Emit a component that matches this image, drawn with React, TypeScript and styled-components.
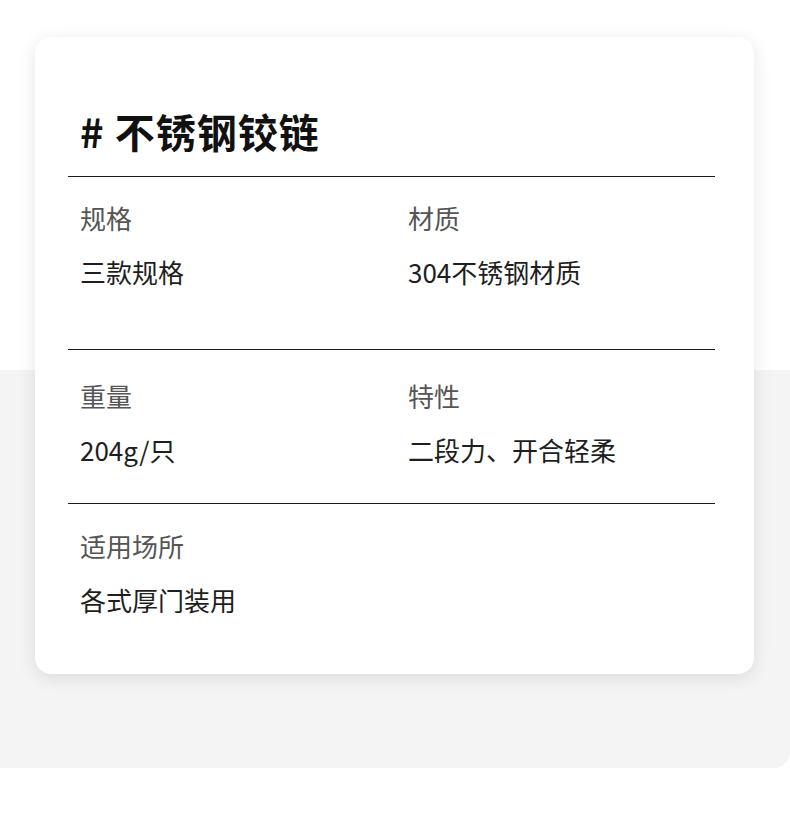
import { FC } from "react";
import styled, { createGlobalStyle } from "styled-components";

const GlobalStyle = createGlobalStyle`
  html, body {
    margin: 0;
    padding: 0;
    background: #fff;
  }

  body {
    font-family: "Noto Sans CJK SC", "Noto Sans", sans-serif;
    -webkit-font-smoothing: antialiased;
  }
`;

const Stage = styled.main`
  position: relative;
  height: 824px;
  padding: 37px 36px 0 35px;
  box-sizing: border-box;

  &::before {
    content: "";
    position: absolute;
    left: 0;
    right: 0;
    top: 370px;
    height: 398px;
    background-color: #f4f4f4;
    border-radius: 0 0 16px 0;
  }
`;

const Card = styled.section`
  position: relative;
  z-index: 1;
  display: flex;
  flex-direction: column;
  height: 637px;
  padding: 0 39px 0 33px;
  box-sizing: border-box;
  background-color: #fff;
  border-radius: 16px;
  box-shadow: 0 4px 18px rgba(0, 0, 0, 0.1);
`;

const Title = styled.h2`
  margin: 70px 0 0;
  padding: 0 12px 21px;
  font-size: 40px;
  font-weight: 700;
  letter-spacing: 1px;
  line-height: 48px;
  color: #111;
  border-bottom: 1px solid #1a1a1a;
`;

const Row = styled.div<{ $top: number; $bottom: number; $line?: boolean }>`
  display: grid;
  grid-template-columns: 328px 1fr;
  padding: ${(p) => `${p.$top}px 12px ${p.$bottom}px`};
  border-bottom: ${(p) => (p.$line ? "1px solid #1a1a1a" : "none")};
`;

const Spec = styled.div`
  display: flex;
  flex-direction: column;
  gap: 18px;
`;

const Label = styled.span`
  font-size: 26px;
  line-height: 36px;
  color: #555;
`;

const Value = styled.span`
  font-size: 26px;
  line-height: 36px;
  color: #1e1e1e;
`;

interface Item {
  label: string;
  value: string;
}

interface RowData {
  items: Item[];
  top: number;
  bottom: number;
  line: boolean;
}

const rows: RowData[] = [
  {
    items: [
      { label: "规格", value: "三款规格" },
      { label: "材质", value: "304不锈钢材质" },
    ],
    top: 23,
    bottom: 59,
    line: true,
  },
  {
    items: [
      { label: "重量", value: "204g/只" },
      { label: "特性", value: "二段力、开合轻柔" },
    ],
    top: 28,
    bottom: 35,
    line: true,
  },
  {
    items: [{ label: "适用场所", value: "各式厚门装用" }],
    top: 24,
    bottom: 0,
    line: false,
  },
];

const SpecItem: FC<Item> = ({ label, value }) => (
  <Spec>
    <Label>{label}</Label>
    <Value>{value}</Value>
  </Spec>
);

const App: FC = () => {
  return (
    <>
      <GlobalStyle />
      <Stage>
        <Card>
          <Title># 不锈钢铰链</Title>
          {rows.map((r, i) => (
            <Row key={i} $top={r.top} $bottom={r.bottom} $line={r.line}>
              {r.items.map((it) => (
                <SpecItem key={it.label} {...it} />
              ))}
            </Row>
          ))}
        </Card>
      </Stage>
    </>
  );
};

export default App;
